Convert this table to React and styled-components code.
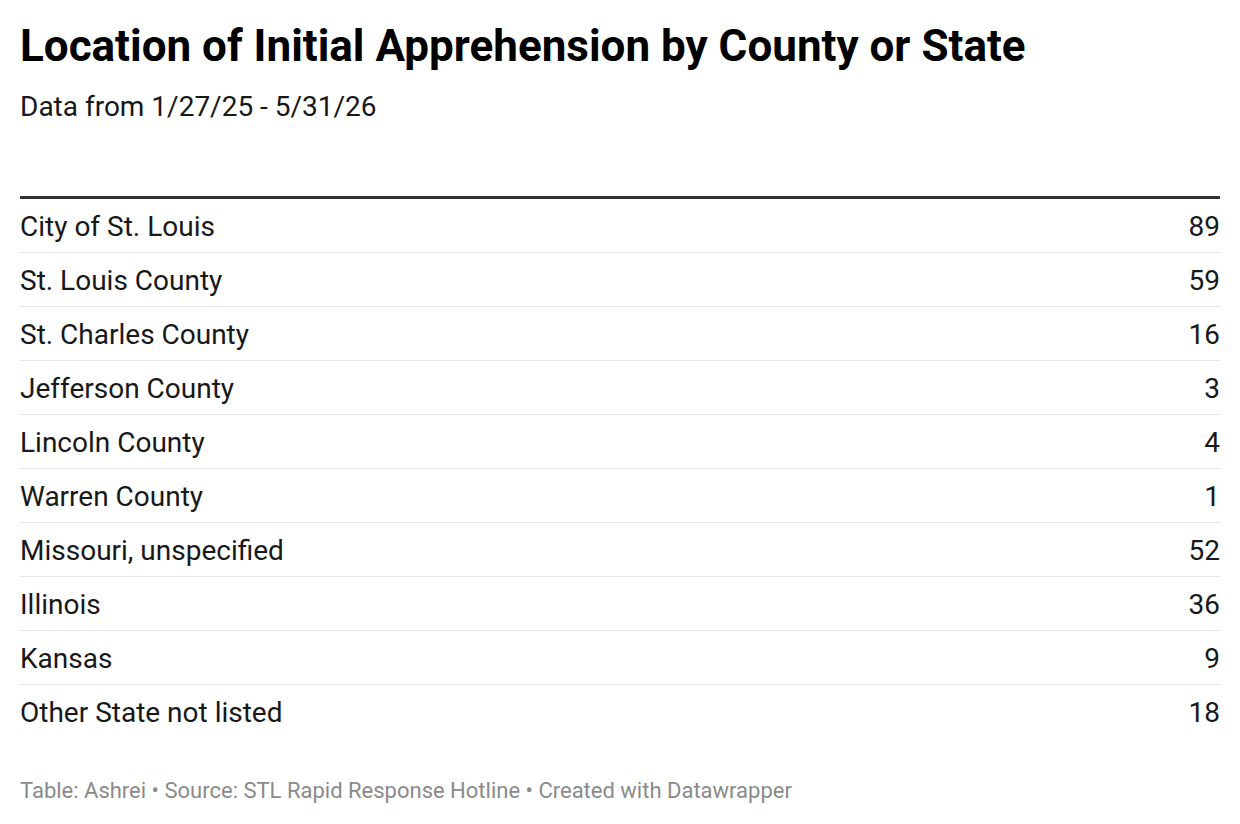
import React from 'react';
import styled, { createGlobalStyle } from 'styled-components';

const GlobalStyle = createGlobalStyle`
  html, body {
    margin: 0;
    padding: 0;
    background: #fff;
  }
  body {
    font-family: Roboto, "Liberation Sans", sans-serif;
    color: #181818;
  }
`;

const rows = [
  ['City of St. Louis', 89],
  ['St. Louis County', 59],
  ['St. Charles County', 16],
  ['Jefferson County', 3],
  ['Lincoln County', 4],
  ['Warren County', 1],
  ['Missouri, unspecified', 52],
  ['Illinois', 36],
  ['Kansas', 9],
  ['Other State not listed', 18],
];

const Chart = styled.div`
  padding: 20px 20px 0;
`;

const Title = styled.h1`
  margin: 0;
  font-size: 44px;
  line-height: 52px;
  font-weight: 700;
  color: #000;
`;

const Subtitle = styled.p`
  margin: 17px 0 0;
  font-size: 28px;
  line-height: 36px;
  color: #181818;
`;

const Table = styled.div`
  margin-top: 71px;
  border-top: 3px solid #333;
`;

const Row = styled.div`
  display: flex;
  justify-content: space-between;
  align-items: center;
  height: 51px;
  padding-top: 2px;
  font-size: 28px;
  color: #181818;
  border-bottom: 1px solid ${({ $last }) => ($last ? 'transparent' : '#e6e6e6')};
`;

const Value = styled.span`
  font-variant-numeric: tabular-nums;
`;

const Footer = styled.div`
  margin-top: 37px;
  font-size: 22px;
  line-height: 30px;
  color: #8a8a8a;
`;

const App = () => (
  <>
    <GlobalStyle />
    <Chart>
      <Title>Location of Initial Apprehension by County or State</Title>
      <Subtitle>Data from 1/27/25 - 5/31/26</Subtitle>
      <Table>
        {rows.map(([name, value], i) => (
          <Row key={name} $last={i === rows.length - 1}>
            <span>{name}</span>
            <Value>{value}</Value>
          </Row>
        ))}
      </Table>
      <Footer>Table: Ashrei • Source: STL Rapid Response Hotline • Created with Datawrapper</Footer>
    </Chart>
  </>
);

export default App;
